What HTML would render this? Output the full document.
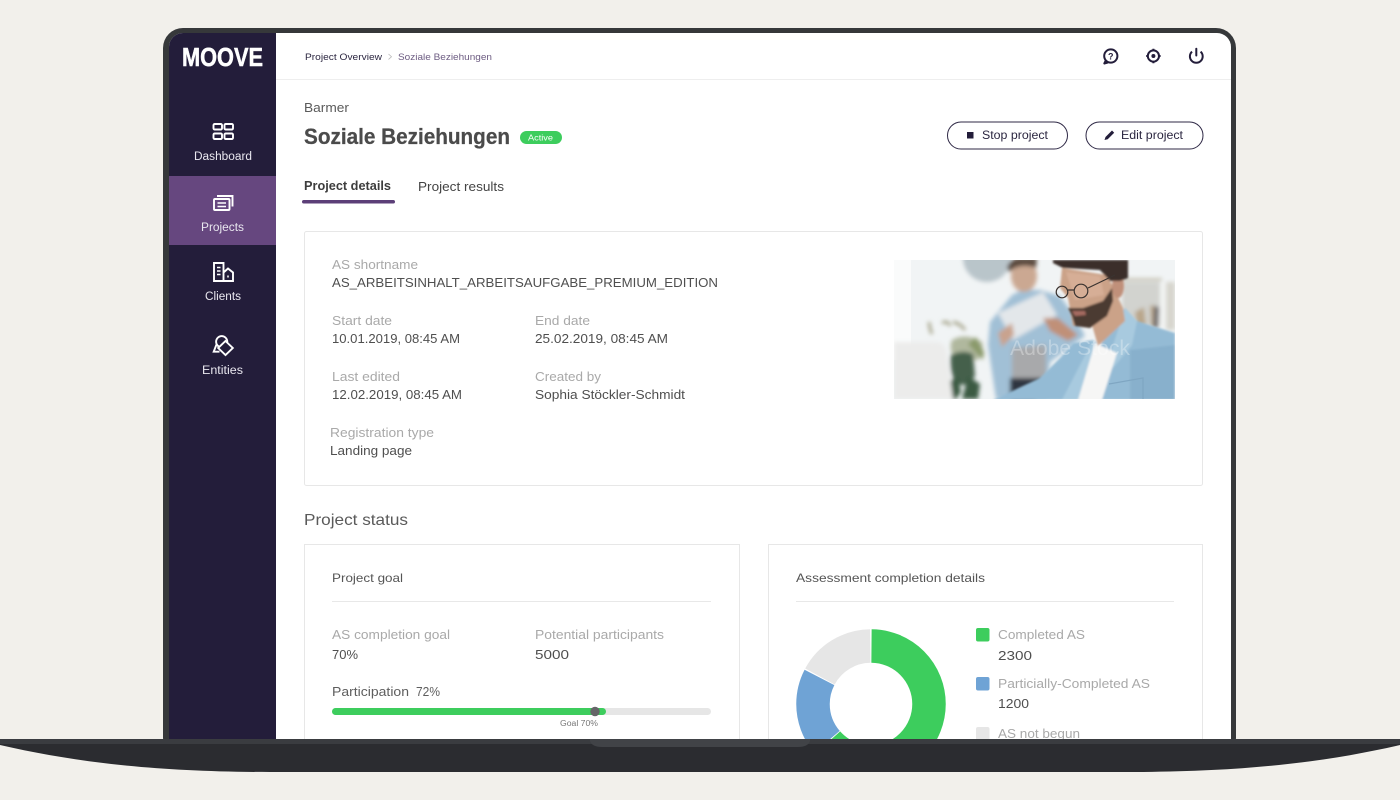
<!DOCTYPE html>
<html lang="en">
<head>
<meta charset="utf-8">
<title>Moove - Soziale Beziehungen</title>
<style>
html,body{margin:0;padding:0;width:1400px;height:800px;overflow:hidden;background:#f2f0eb}
svg{display:block}
text{font-family:"Liberation Sans",sans-serif}
.l{font-size:12.5px;fill:#a9a9a9}
.v{font-size:12.5px;fill:#4f4f4f}
.n{font-size:11.5px;fill:#e9e7ef;font-weight:400}
</style>
</head>
<body>
<svg width="1400" height="800" viewBox="0 0 1400 800" xmlns="http://www.w3.org/2000/svg">
<defs>
<clipPath id="screen"><path d="M183 33H1217a14 14 0 0 1 14 14V739H169V47a14 14 0 0 1 14-14z"/></clipPath>
<clipPath id="photo"><rect x="894" y="260" width="281" height="139"/></clipPath>
<filter id="b3" x="-20%" y="-20%" width="140%" height="140%"><feGaussianBlur stdDeviation="2"/></filter>
<filter id="b1" x="-20%" y="-20%" width="140%" height="140%"><feGaussianBlur stdDeviation="1"/></filter>
</defs>

<rect width="1400" height="800" fill="#f2f0eb"/>
<rect x="163" y="28" width="1073" height="730" rx="20" fill="#36383a"/>

<g clip-path="url(#screen)">
<rect x="169" y="33" width="1062" height="706" fill="#fff"/>
<rect x="169" y="33" width="107" height="706" fill="#231d3a"/>
<rect x="169" y="176" width="107" height="69" fill="#66477f"/>
<rect x="276" y="79" width="955" height="1" fill="#eeeeee"/>

<text x="182" y="66" font-size="26" font-weight="700" fill="#fff" stroke="#fff" stroke-width=".5" textLength="81" lengthAdjust="spacingAndGlyphs">MOOVE</text>

<g fill="none" stroke="#fff" stroke-width="1.9">
<rect x="213.5" y="124" width="8.5" height="5.5" rx="1.2"/>
<rect x="224.5" y="124" width="8.5" height="5.5" rx="1.2"/>
<rect x="213.5" y="133.5" width="8.5" height="5.5" rx="1.2"/>
<rect x="224.5" y="133.5" width="8.5" height="5.5" rx="1.2"/>
<rect x="214" y="199" width="15.5" height="11" rx="1"/>
<path d="M217 196H232.5V206.5"/>
<path d="M217.5 203H226M217.5 206.5H226" stroke-width="1.5"/>
<path d="M214 263H223.5V281H214z"/>
<path d="M223.5 272.5L228 268.5L233 272.5V281H223.5"/>
<path d="M217 267.5H220.5M217 271H220.5M217 274.5H220.5M228 275.5V277.5" stroke-width="1.5"/>
<circle cx="221.7" cy="341.7" r="5.6"/>
<path d="M216.5 344.5L213.7 351.7H219.5"/>
<path d="M225.5 341L232.8 348L225.5 355L218.2 348Z" fill="#231d3a"/>
</g>
<text class="n" x="194" y="160" textLength="58" lengthAdjust="spacingAndGlyphs">Dashboard</text>
<text class="n" x="201" y="231" textLength="43" lengthAdjust="spacingAndGlyphs">Projects</text>
<text class="n" x="205" y="300" textLength="36" lengthAdjust="spacingAndGlyphs">Clients</text>
<text class="n" x="202" y="374" textLength="41" lengthAdjust="spacingAndGlyphs">Entities</text>

<text x="305" y="60" font-size="9.5" fill="#2b2640" textLength="77" lengthAdjust="spacingAndGlyphs">Project Overview</text>
<path d="M388.5 54l3 2.7-3 2.7" fill="none" stroke="#bbb" stroke-width=".8"/>
<text x="398" y="60" font-size="9.5" fill="#6d5c82" textLength="94" lengthAdjust="spacingAndGlyphs">Soziale Beziehungen</text>

<g fill="none" stroke="#231d3a" stroke-width="2">
<circle cx="1110.8" cy="56" r="6.6"/>
<path d="M1105.8 60.5L1104.3 63.5L1108.2 62.4" stroke-linejoin="round"/>
<circle cx="1153.4" cy="56" r="5.6"/>
<path d="M1153.4 48.8v2M1153.4 61.2v2M1146.2 56h2M1158.6 56h2"/>
<path d="M1192 51.6A6.4 6.4 0 1 0 1200.6 51.6"/>
<path d="M1196.3 48.8V55.5" stroke-linecap="round"/>
</g>
<text x="1110.8" y="59.4" font-size="9" font-weight="700" text-anchor="middle" fill="#231d3a">?</text>
<circle cx="1153.4" cy="56" r="2" fill="#231d3a"/>

<text x="304" y="112" font-size="12.5" fill="#5a5a5a" textLength="45" lengthAdjust="spacingAndGlyphs">Barmer</text>
<text x="304" y="144" font-size="22" font-weight="700" fill="#4b4b4b" stroke="#4b4b4b" stroke-width=".25" textLength="206" lengthAdjust="spacingAndGlyphs">Soziale Beziehungen</text>
<rect x="520" y="131" width="42" height="13" rx="6.5" fill="#3dcd5d"/>
<text x="528" y="140.5" font-size="8" fill="#fff" textLength="25" lengthAdjust="spacingAndGlyphs">Active</text>

<rect x="947.5" y="122" width="120" height="27" rx="13.5" fill="#fff" stroke="#2f2946" stroke-width="1"/>
<rect x="967" y="132" width="6.5" height="6.5" fill="#231d3a"/>
<text x="982" y="139" font-size="11.5" fill="#2b2640" textLength="66" lengthAdjust="spacingAndGlyphs">Stop project</text>
<rect x="1086" y="122" width="117" height="27" rx="13.5" fill="#fff" stroke="#2f2946" stroke-width="1"/>
<path d="M1104.5 140l1-3 6.5-6.5 2.2 2.2-6.5 6.5z" fill="#231d3a"/>
<text x="1121" y="139" font-size="11.5" fill="#2b2640" textLength="62" lengthAdjust="spacingAndGlyphs">Edit project</text>

<text x="304" y="190" font-size="12.5" font-weight="700" fill="#3d3d3d" textLength="87" lengthAdjust="spacingAndGlyphs">Project details</text>
<text x="418" y="191" font-size="12.5" fill="#444" textLength="86" lengthAdjust="spacingAndGlyphs">Project results</text>
<rect x="302" y="200" width="93" height="3.5" rx="1.75" fill="#5c3f78"/>

<rect x="304.5" y="231.5" width="898" height="254" rx="2" fill="#fff" stroke="#e7e7e7"/>
<text class="l" x="332" y="269" textLength="86" lengthAdjust="spacingAndGlyphs">AS shortname</text>
<text class="v" x="332" y="287" textLength="386" lengthAdjust="spacingAndGlyphs">AS_ARBEITSINHALT_ARBEITSAUFGABE_PREMIUM_EDITION</text>
<text class="l" x="332" y="325" textLength="60" lengthAdjust="spacingAndGlyphs">Start date</text>
<text class="l" x="535" y="325" textLength="55" lengthAdjust="spacingAndGlyphs">End date</text>
<text class="v" x="332" y="343" textLength="128" lengthAdjust="spacingAndGlyphs">10.01.2019, 08:45 AM</text>
<text class="v" x="535" y="343" textLength="133" lengthAdjust="spacingAndGlyphs">25.02.2019, 08:45 AM</text>
<text class="l" x="332" y="381" textLength="68" lengthAdjust="spacingAndGlyphs">Last edited</text>
<text class="l" x="535" y="381" textLength="66" lengthAdjust="spacingAndGlyphs">Created by</text>
<text class="v" x="332" y="399" textLength="130" lengthAdjust="spacingAndGlyphs">12.02.2019, 08:45 AM</text>
<text class="v" x="535" y="399" textLength="150" lengthAdjust="spacingAndGlyphs">Sophia Stöckler-Schmidt</text>
<text class="l" x="330" y="437" textLength="104" lengthAdjust="spacingAndGlyphs">Registration type</text>
<text class="v" x="330" y="455" textLength="82" lengthAdjust="spacingAndGlyphs">Landing page</text>

<g clip-path="url(#photo)">
<rect x="894" y="260" width="281" height="139" fill="#f1f4f5"/>
<rect x="894" y="260" width="17" height="100" fill="#fafbfb"/>
<g filter="url(#b3)">
<circle cx="987" cy="258" r="24" fill="#b9c5ca"/>
<rect x="1120" y="278" width="42" height="3" fill="#c9c6b8"/>
<rect x="1122" y="282" width="38" height="44" fill="#d2d3cf"/>
<rect x="1161" y="282" width="4" height="46" fill="#f4f5f4"/>
<rect x="1166" y="282" width="9" height="48" fill="#d7d5cd"/>
<path d="M1135 312l9-5 2 18-9 2zM1150 306l4-1 1 22h-4z" fill="#b9a68a"/>
<path d="M1154 306l5 1-1 21h-5z" fill="#6f6c6d"/>
<path d="M990 322L1012 295L1022 290H1040L1060 296L1076 318L1085 336L1050 362L1046 399H996L988 345Z" fill="#a1c0d6"/>
<path d="M1012 348L1046 345L1046 378L1012 378Z" fill="#a8a9ab"/>
<path d="M1010 378H1042L1036 399H1010z" fill="#2f3440"/>
<ellipse cx="1024" cy="276" rx="13" ry="16" fill="#cba892"/>
<path d="M1007 268Q1010 258 1020 258H1037L1036 268Q1020 262 1009 272z" fill="#5a4a3e"/>
<path d="M998 313L1043 292L1057 315L1013 340Z" fill="#e3e7ea"/>
<path d="M998 333L1012 323L1014 335L1002 347z" fill="#c9a38e"/>
<path d="M1043 318L1058 318L1078 335L1068 341L1050 331z" fill="#c09078"/>
<path d="M942 323q6-3 8 3M953 322q8 2 12 8M929 322q1 8 3 12" stroke="#a7a68d" stroke-width="3" fill="none"/>
<path d="M952 340q14-8 30 2q2 10-4 18h-22q-8-10-4-20z" fill="#b0b89e"/>
<path d="M951 355q12-6 22-1l2 22q-10 14-20 6q-6-12-4-27z" fill="#44604c"/>
<path d="M948 382l10-5 3 15-5 7h-5zM968 376l12 8-2 15h-16z" fill="#3b5a42"/>
<path d="M968 344l8-7 8 15-1 8z" fill="#8a9a6a"/>
<path d="M894 342H935Q944 342 946 350L953 399H894z" fill="#ececeb"/>
</g>
<g filter="url(#b1)">
<path d="M993 400L1040 378L1060 358L1073 343L1093 340L1100 346L1125 308L1137 321L1175 333V400Z" fill="#94bbd5"/>
<path d="M1093 340L1101 348L1082 400H1062Z" fill="#a8cadf"/>
<path d="M1125 308L1137 321L1132 345L1113 368L1110 355Z" fill="#a8cadf"/>
<path d="M1130 350L1175 345V400H1130Z" fill="#88b0cc"/>
<path d="M1095 343L1117 353L1102 400H1078Z" fill="#f6f6f5"/>
<path d="M1062 268L1107 275L1115 291L1123 308L1125 321L1098 346L1092 325L1073 326L1068 298L1060 288Z" fill="#cba288"/>
<path d="M1066 272L1100 276L1104 295L1075 300Z" fill="#d6ae96"/>
<ellipse cx="1118" cy="286" rx="6" ry="12" fill="#c0907a"/>
<path d="M1068 308L1083 308L1103 301L1112 288L1113 301L1107 316L1090 328L1075 326L1072 316Z" fill="#4c3a30"/>
<path d="M1072 311L1085 311L1086 315L1075 316Z" fill="#a56a60"/>
<path d="M1053 260H1128V278L1120 281L1110 281L1100 270L1063 268L1053 263Z" fill="#3b2f2a"/>
</g>
<g fill="none" stroke="#3a3330" stroke-width="1.2">
<circle cx="1062" cy="292" r="5.8"/>
<circle cx="1081" cy="291" r="6.8"/>
<path d="M1088 288L1115 275M1068 290L1074 290"/>
</g>
<path d="M1109 384L1143 378V399" fill="none" stroke="#7fa6c2" stroke-width="1.2"/>
<text x="1010" y="355" font-size="21" fill="#fff" fill-opacity=".3" textLength="120" lengthAdjust="spacingAndGlyphs">Adobe Stock</text>
</g>

<text x="304" y="525" font-size="16" fill="#5a5a5a" textLength="104" lengthAdjust="spacingAndGlyphs">Project status</text>

<rect x="304.5" y="544.5" width="435" height="260" fill="#fff" stroke="#e7e7e7"/>
<text x="332" y="582" font-size="12" fill="#555" textLength="71" lengthAdjust="spacingAndGlyphs">Project goal</text>
<rect x="332" y="601" width="379" height="1" fill="#e8e8e8"/>
<text class="l" x="332" y="639" textLength="118" lengthAdjust="spacingAndGlyphs">AS completion goal</text>
<text class="l" x="535" y="639" textLength="129" lengthAdjust="spacingAndGlyphs">Potential participants</text>
<text class="v" x="332" y="659" textLength="26" lengthAdjust="spacingAndGlyphs">70%</text>
<text class="v" x="535" y="659" textLength="34" lengthAdjust="spacingAndGlyphs">5000</text>
<text x="332" y="696" font-size="12.5" fill="#5e5e5e" textLength="77" lengthAdjust="spacingAndGlyphs">Participation</text>
<text x="416" y="696" font-size="12.5" fill="#5e5e5e" textLength="24" lengthAdjust="spacingAndGlyphs">72%</text>
<rect x="332" y="708" width="379" height="7" rx="3.5" fill="#e6e6e6"/>
<rect x="332" y="708" width="274" height="7" rx="3.5" fill="#3dcd5d"/>
<circle cx="595" cy="711.5" r="4.7" fill="#666669"/>
<text x="560" y="726" font-size="8" fill="#777" textLength="38" lengthAdjust="spacingAndGlyphs">Goal 70%</text>

<rect x="768.5" y="544.5" width="434" height="260" fill="#fff" stroke="#e7e7e7"/>
<text x="796" y="582" font-size="12" fill="#555" textLength="189" lengthAdjust="spacingAndGlyphs">Assessment completion details</text>
<rect x="796" y="601" width="378" height="1" fill="#e8e8e8"/>
<g fill="none" stroke-width="33.5" transform="rotate(-90 871 704)">
<circle cx="871" cy="704" r="58" pathLength="360" stroke="#3dcd5d" stroke-dasharray="228 132" stroke-dashoffset="-0.5"/>
<circle cx="871" cy="704" r="58" pathLength="360" stroke="#6fa3d5" stroke-dasharray="68 292" stroke-dashoffset="-229.5"/>
<circle cx="871" cy="704" r="58" pathLength="360" stroke="#e6e6e6" stroke-dasharray="61 299" stroke-dashoffset="-298.5"/>
</g>
<rect x="976" y="628" width="13.5" height="13.5" rx="2" fill="#3dcd5d"/>
<text class="l" x="998" y="639" textLength="87" lengthAdjust="spacingAndGlyphs">Completed AS</text>
<text class="v" x="998" y="660" textLength="34" lengthAdjust="spacingAndGlyphs">2300</text>
<rect x="976" y="677" width="13.5" height="13.5" rx="2" fill="#6fa3d5"/>
<text class="l" x="998" y="688" textLength="152" lengthAdjust="spacingAndGlyphs">Particially-Completed AS</text>
<text class="v" x="998" y="708" textLength="31" lengthAdjust="spacingAndGlyphs">1200</text>
<rect x="976" y="727" width="13.5" height="13.5" rx="2" fill="#e6e6e6"/>
<text class="l" x="998" y="738" textLength="82" lengthAdjust="spacingAndGlyphs">AS not begun</text>
</g>

<path d="M0 739H1400V745C1330 761 1250 772 1130 772H270C150 772 70 761 0 745Z" fill="#2b2c30"/>
<rect x="0" y="739" width="1400" height="5" fill="#3a3c40"/>
<path d="M590 739H810V741Q808 747 798 747H602Q592 747 590 741Z" fill="#414347"/>
</svg>
</body>
</html>
